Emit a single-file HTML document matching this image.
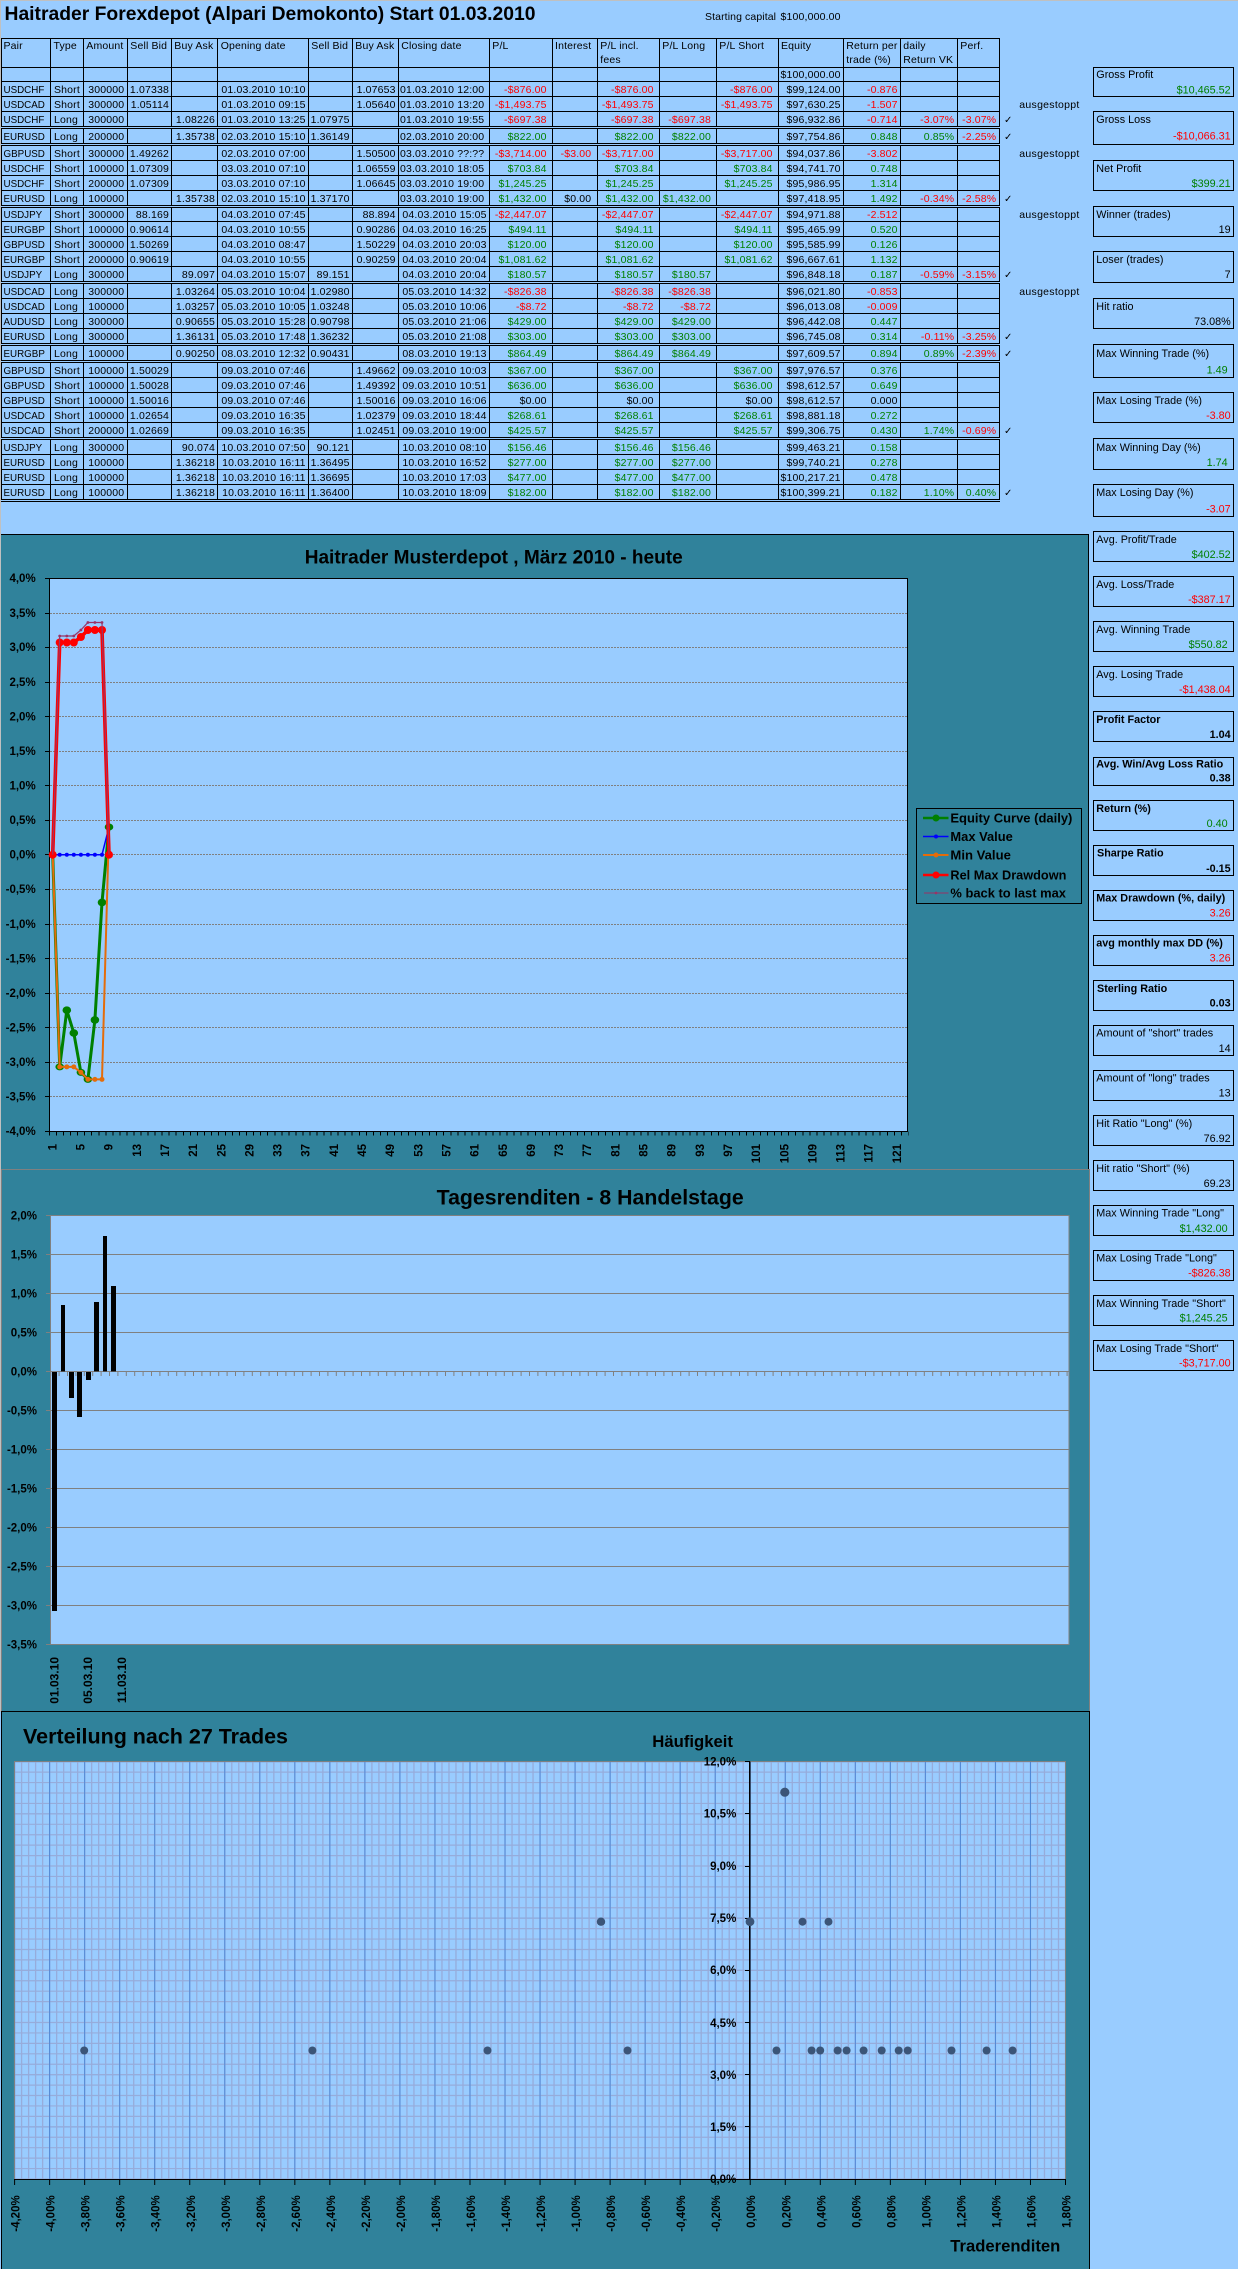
<!DOCTYPE html>
<html lang="de"><head><meta charset="utf-8"><title>Haitrader Forexdepot</title>
<style>
html,body{margin:0;padding:0;background:#99ccff}
svg{display:block}
text{font:10.5px "Liberation Sans",Arial,sans-serif;fill:#000}
.t text{letter-spacing:.16px}
.t .p{font-size:9.8px;letter-spacing:0}
.a,.ar,.ag{text-anchor:end}
.ar{fill:#f00}
.ag{fill:#008000}
.c{font:10px "DejaVu Sans",sans-serif;text-anchor:middle}
.st text{font-size:10.8px}
.st .bd{font-weight:bold}
.st rect{fill:none;stroke:#000}
.bl text,.bl{font-weight:bold;font-size:11.5px}
.e{text-anchor:end}
.x{shape-rendering:crispEdges;fill:none}
</style></head><body>
<svg xmlns="http://www.w3.org/2000/svg" width="1238" height="2269" viewBox="0 0 1238 2269">
<rect width="1238" height="2269" fill="#99ccff"/>
<rect width="1238" height="1" fill="#c0c0c0"/>
<rect width="1" height="1712" fill="#c0c0c0"/>

<text x="4.5" y="20" textLength="531" lengthAdjust="spacingAndGlyphs" style="font-size:19px;font-weight:bold">Haitrader Forexdepot (Alpari Demokonto) Start 01.03.2010</text>
<text x="705" y="20" textLength="71">Starting capital</text>
<text x="840.7" y="20" class="a" style="letter-spacing:.16px">$100,000.00</text>

<!-- table grid -->
<path class="x" stroke="#000" d="M1.5 38.5V501.5M50.5 38.5V501.5M83.5 38.5V501.5M127.5 38.5V501.5M171.5 38.5V501.5M217.5 38.5V501.5M308.5 38.5V501.5M352.5 38.5V501.5M398.5 38.5V501.5M489.5 38.5V501.5M552.5 38.5V501.5M597.5 38.5V501.5M659.5 38.5V501.5M716.5 38.5V501.5M778.5 38.5V501.5M843.5 38.5V501.5M900.5 38.5V501.5M957.5 38.5V501.5M999.5 38.5V501.5"/>
<path class="x" stroke="#99ccff" d="M1 127.5H1000M1 144.5H1000M1 206.5H1000M1 282.5H1000M1 344.5H1000M1 361.5H1000M1 438.5H1000M1 500.5H1000"/>
<path class="x" stroke="#000" d="M1 38.5H1000M1 67.5H1000M1 81.5H1000M1 96.5H1000M1 111.5H1000M1 126.5H1000M1 128.5H1000M1 143.5H1000M1 145.5H1000M1 160.5H1000M1 175.5H1000M1 190.5H1000M1 205.5H1000M1 207.5H1000M1 221.5H1000M1 236.5H1000M1 251.5H1000M1 266.5H1000M1 281.5H1000M1 283.5H1000M1 298.5H1000M1 313.5H1000M1 328.5H1000M1 343.5H1000M1 345.5H1000M1 360.5H1000M1 362.5H1000M1 377.5H1000M1 392.5H1000M1 407.5H1000M1 422.5H1000M1 437.5H1000M1 439.5H1000M1 454.5H1000M1 469.5H1000M1 484.5H1000M1 499.5H1000M1 501.5H1000"/>

<g class="t">
<g transform="translate(0,49)"><text x="3.5">Pair</text><text x="53.5">Type</text><text x="86.3">Amount</text><text x="130.3">Sell Bid</text><text x="174.3">Buy Ask</text><text x="220.7">Opening date</text><text x="311.3">Sell Bid</text><text x="355.3">Buy Ask</text><text x="401.3">Closing date</text><text x="492.3">P/L</text><text x="555">Interest</text><text x="600.3">P/L incl.</text><text x="662.3">P/L Long</text><text x="719.3">P/L Short</text><text x="781">Equity</text><text x="846.3">Return per</text><text x="903.3">daily</text><text x="960.3">Perf.</text></g>
<g transform="translate(0,63)"><text x="600.3">fees</text><text x="846.3">trade (%)</text><text x="903.3">Return VK</text></g>
<text x="840.7" y="78" class="a">$100,000.00</text>

<g transform="translate(0,93)"><text x="3.5" class="p">USDCHF</text><text x="54">Short</text><text x="124.3" class="a">300000</text><text x="169" class="a">1.07338</text><text x="305.7" class="a">01.03.2010 10:10</text><text x="395.7" class="a">1.07653</text><text x="484.3" class="a">01.03.2010 12:00</text><text x="546.7" class="ar">-$876.00</text><text x="653.7" class="ar">-$876.00</text><text x="772.7" class="ar">-$876.00</text><text x="840.7" class="a">$99,124.00</text><text x="897.7" class="ar">-0.876</text></g>
<g transform="translate(0,108)"><text x="3.5" class="p">USDCAD</text><text x="54">Short</text><text x="124.3" class="a">300000</text><text x="169" class="a">1.05114</text><text x="305.7" class="a">01.03.2010 09:15</text><text x="395.7" class="a">1.05640</text><text x="484.3" class="a">01.03.2010 13:20</text><text x="546.7" class="ar">-$1,493.75</text><text x="653.7" class="ar">-$1,493.75</text><text x="772.7" class="ar">-$1,493.75</text><text x="840.7" class="a">$97,630.25</text><text x="897.7" class="ar">-1.507</text></g>
<g transform="translate(0,123)"><text x="3.5" class="p">USDCHF</text><text x="54">Long</text><text x="124.3" class="a">300000</text><text x="215" class="a">1.08226</text><text x="305.7" class="a">01.03.2010 13:25</text><text x="349.7" class="a">1.07975</text><text x="484.3" class="a">01.03.2010 19:55</text><text x="546.7" class="ar">-$697.38</text><text x="653.7" class="ar">-$697.38</text><text x="711" class="ar">-$697.38</text><text x="840.7" class="a">$96,932.86</text><text x="897.7" class="ar">-0.714</text><text x="954.3" class="ar">-3.07%</text><text x="996.3" class="ar">-3.07%</text><text x="1008.3" class="c">✓</text></g>
<g transform="translate(0,140)"><text x="3.5" class="p">EURUSD</text><text x="54">Long</text><text x="124.3" class="a">200000</text><text x="215" class="a">1.35738</text><text x="305.7" class="a">02.03.2010 15:10</text><text x="349.7" class="a">1.36149</text><text x="484.3" class="a">02.03.2010 20:00</text><text x="546.7" class="ag">$822.00</text><text x="653.7" class="ag">$822.00</text><text x="711" class="ag">$822.00</text><text x="840.7" class="a">$97,754.86</text><text x="897.7" class="ag">0.848</text><text x="954.3" class="ag">0.85%</text><text x="996.3" class="ar">-2.25%</text><text x="1008.3" class="c">✓</text></g>
<g transform="translate(0,157)"><text x="3.5" class="p">GBPUSD</text><text x="54">Short</text><text x="124.3" class="a">300000</text><text x="169" class="a">1.49262</text><text x="305.7" class="a">02.03.2010 07:00</text><text x="395.7" class="a">1.50500</text><text x="484.3" class="a">03.03.2010 ??:??</text><text x="546.7" class="ar">-$3,714.00</text><text x="591.3" class="ar">-$3.00</text><text x="653.7" class="ar">-$3,717.00</text><text x="772.7" class="ar">-$3,717.00</text><text x="840.7" class="a">$94,037.86</text><text x="897.7" class="ar">-3.802</text></g>
<g transform="translate(0,172)"><text x="3.5" class="p">USDCHF</text><text x="54">Short</text><text x="124.3" class="a">100000</text><text x="169" class="a">1.07309</text><text x="305.7" class="a">03.03.2010 07:10</text><text x="395.7" class="a">1.06559</text><text x="484.3" class="a">03.03.2010 18:05</text><text x="546.7" class="ag">$703.84</text><text x="653.7" class="ag">$703.84</text><text x="772.7" class="ag">$703.84</text><text x="840.7" class="a">$94,741.70</text><text x="897.7" class="ag">0.748</text></g>
<g transform="translate(0,187)"><text x="3.5" class="p">USDCHF</text><text x="54">Short</text><text x="124.3" class="a">200000</text><text x="169" class="a">1.07309</text><text x="305.7" class="a">03.03.2010 07:10</text><text x="395.7" class="a">1.06645</text><text x="484.3" class="a">03.03.2010 19:00</text><text x="546.7" class="ag">$1,245.25</text><text x="653.7" class="ag">$1,245.25</text><text x="772.7" class="ag">$1,245.25</text><text x="840.7" class="a">$95,986.95</text><text x="897.7" class="ag">1.314</text></g>
<g transform="translate(0,202)"><text x="3.5" class="p">EURUSD</text><text x="54">Long</text><text x="124.3" class="a">100000</text><text x="215" class="a">1.35738</text><text x="305.7" class="a">02.03.2010 15:10</text><text x="349.7" class="a">1.37170</text><text x="484.3" class="a">03.03.2010 19:00</text><text x="546.7" class="ag">$1,432.00</text><text x="591.3" class="a">$0.00</text><text x="653.7" class="ag">$1,432.00</text><text x="711" class="ag">$1,432.00</text><text x="840.7" class="a">$97,418.95</text><text x="897.7" class="ag">1.492</text><text x="954.3" class="ar">-0.34%</text><text x="996.3" class="ar">-2.58%</text><text x="1008.3" class="c">✓</text></g>
<g transform="translate(0,218)"><text x="3.5" class="p">USDJPY</text><text x="54">Short</text><text x="124.3" class="a">300000</text><text x="169" class="a">88.169</text><text x="305.7" class="a">04.03.2010 07:45</text><text x="395.7" class="a">88.894</text><text x="486.7" class="a">04.03.2010 15:05</text><text x="546.7" class="ar">-$2,447.07</text><text x="653.7" class="ar">-$2,447.07</text><text x="772.7" class="ar">-$2,447.07</text><text x="840.7" class="a">$94,971.88</text><text x="897.7" class="ar">-2.512</text></g>
<g transform="translate(0,233)"><text x="3.5" class="p">EURGBP</text><text x="54">Short</text><text x="124.3" class="a">100000</text><text x="169" class="a">0.90614</text><text x="305.7" class="a">04.03.2010 10:55</text><text x="395.7" class="a">0.90286</text><text x="486.7" class="a">04.03.2010 16:25</text><text x="546.7" class="ag">$494.11</text><text x="653.7" class="ag">$494.11</text><text x="772.7" class="ag">$494.11</text><text x="840.7" class="a">$95,465.99</text><text x="897.7" class="ag">0.520</text></g>
<g transform="translate(0,248)"><text x="3.5" class="p">GBPUSD</text><text x="54">Short</text><text x="124.3" class="a">300000</text><text x="169" class="a">1.50269</text><text x="305.7" class="a">04.03.2010 08:47</text><text x="395.7" class="a">1.50229</text><text x="486.7" class="a">04.03.2010 20:03</text><text x="546.7" class="ag">$120.00</text><text x="653.7" class="ag">$120.00</text><text x="772.7" class="ag">$120.00</text><text x="840.7" class="a">$95,585.99</text><text x="897.7" class="ag">0.126</text></g>
<g transform="translate(0,263)"><text x="3.5" class="p">EURGBP</text><text x="54">Short</text><text x="124.3" class="a">200000</text><text x="169" class="a">0.90619</text><text x="305.7" class="a">04.03.2010 10:55</text><text x="395.7" class="a">0.90259</text><text x="486.7" class="a">04.03.2010 20:04</text><text x="546.7" class="ag">$1,081.62</text><text x="653.7" class="ag">$1,081.62</text><text x="772.7" class="ag">$1,081.62</text><text x="840.7" class="a">$96,667.61</text><text x="897.7" class="ag">1.132</text></g>
<g transform="translate(0,278)"><text x="3.5" class="p">USDJPY</text><text x="54">Long</text><text x="124.3" class="a">300000</text><text x="215" class="a">89.097</text><text x="305.7" class="a">04.03.2010 15:07</text><text x="349.7" class="a">89.151</text><text x="486.7" class="a">04.03.2010 20:04</text><text x="546.7" class="ag">$180.57</text><text x="653.7" class="ag">$180.57</text><text x="711" class="ag">$180.57</text><text x="840.7" class="a">$96,848.18</text><text x="897.7" class="ag">0.187</text><text x="954.3" class="ar">-0.59%</text><text x="996.3" class="ar">-3.15%</text><text x="1008.3" class="c">✓</text></g>
<g transform="translate(0,295)"><text x="3.5" class="p">USDCAD</text><text x="54">Long</text><text x="124.3" class="a">300000</text><text x="215" class="a">1.03264</text><text x="305.7" class="a">05.03.2010 10:04</text><text x="349.7" class="a">1.02980</text><text x="486.7" class="a">05.03.2010 14:32</text><text x="546.7" class="ar">-$826.38</text><text x="653.7" class="ar">-$826.38</text><text x="711" class="ar">-$826.38</text><text x="840.7" class="a">$96,021.80</text><text x="897.7" class="ar">-0.853</text></g>
<g transform="translate(0,310)"><text x="3.5" class="p">USDCAD</text><text x="54">Long</text><text x="124.3" class="a">100000</text><text x="215" class="a">1.03257</text><text x="305.7" class="a">05.03.2010 10:05</text><text x="349.7" class="a">1.03248</text><text x="486.7" class="a">05.03.2010 10:06</text><text x="546.7" class="ar">-$8.72</text><text x="653.7" class="ar">-$8.72</text><text x="711" class="ar">-$8.72</text><text x="840.7" class="a">$96,013.08</text><text x="897.7" class="ar">-0.009</text></g>
<g transform="translate(0,325)"><text x="3.5" class="p">AUDUSD</text><text x="54">Long</text><text x="124.3" class="a">300000</text><text x="215" class="a">0.90655</text><text x="305.7" class="a">05.03.2010 15:28</text><text x="349.7" class="a">0.90798</text><text x="486.7" class="a">05.03.2010 21:06</text><text x="546.7" class="ag">$429.00</text><text x="653.7" class="ag">$429.00</text><text x="711" class="ag">$429.00</text><text x="840.7" class="a">$96,442.08</text><text x="897.7" class="ag">0.447</text></g>
<g transform="translate(0,340)"><text x="3.5" class="p">EURUSD</text><text x="54">Long</text><text x="124.3" class="a">300000</text><text x="215" class="a">1.36131</text><text x="305.7" class="a">05.03.2010 17:48</text><text x="349.7" class="a">1.36232</text><text x="486.7" class="a">05.03.2010 21:08</text><text x="546.7" class="ag">$303.00</text><text x="653.7" class="ag">$303.00</text><text x="711" class="ag">$303.00</text><text x="840.7" class="a">$96,745.08</text><text x="897.7" class="ag">0.314</text><text x="954.3" class="ar">-0.11%</text><text x="996.3" class="ar">-3.25%</text><text x="1008.3" class="c">✓</text></g>
<g transform="translate(0,357)"><text x="3.5" class="p">EURGBP</text><text x="54">Long</text><text x="124.3" class="a">100000</text><text x="215" class="a">0.90250</text><text x="305.7" class="a">08.03.2010 12:32</text><text x="349.7" class="a">0.90431</text><text x="486.7" class="a">08.03.2010 19:13</text><text x="546.7" class="ag">$864.49</text><text x="653.7" class="ag">$864.49</text><text x="711" class="ag">$864.49</text><text x="840.7" class="a">$97,609.57</text><text x="897.7" class="ag">0.894</text><text x="954.3" class="ag">0.89%</text><text x="996.3" class="ar">-2.39%</text><text x="1008.3" class="c">✓</text></g>
<g transform="translate(0,374)"><text x="3.5" class="p">GBPUSD</text><text x="54">Short</text><text x="124.3" class="a">100000</text><text x="169" class="a">1.50029</text><text x="305.7" class="a">09.03.2010 07:46</text><text x="395.7" class="a">1.49662</text><text x="486.7" class="a">09.03.2010 10:03</text><text x="546.7" class="ag">$367.00</text><text x="653.7" class="ag">$367.00</text><text x="772.7" class="ag">$367.00</text><text x="840.7" class="a">$97,976.57</text><text x="897.7" class="ag">0.376</text></g>
<g transform="translate(0,389)"><text x="3.5" class="p">GBPUSD</text><text x="54">Short</text><text x="124.3" class="a">100000</text><text x="169" class="a">1.50028</text><text x="305.7" class="a">09.03.2010 07:46</text><text x="395.7" class="a">1.49392</text><text x="486.7" class="a">09.03.2010 10:51</text><text x="546.7" class="ag">$636.00</text><text x="653.7" class="ag">$636.00</text><text x="772.7" class="ag">$636.00</text><text x="840.7" class="a">$98,612.57</text><text x="897.7" class="ag">0.649</text></g>
<g transform="translate(0,404)"><text x="3.5" class="p">GBPUSD</text><text x="54">Short</text><text x="124.3" class="a">100000</text><text x="169" class="a">1.50016</text><text x="305.7" class="a">09.03.2010 07:46</text><text x="395.7" class="a">1.50016</text><text x="486.7" class="a">09.03.2010 16:06</text><text x="546.7" class="a">$0.00</text><text x="653.7" class="a">$0.00</text><text x="772.7" class="a">$0.00</text><text x="840.7" class="a">$98,612.57</text><text x="897.7" class="a">0.000</text></g>
<g transform="translate(0,419)"><text x="3.5" class="p">USDCAD</text><text x="54">Short</text><text x="124.3" class="a">100000</text><text x="169" class="a">1.02654</text><text x="305.7" class="a">09.03.2010 16:35</text><text x="395.7" class="a">1.02379</text><text x="486.7" class="a">09.03.2010 18:44</text><text x="546.7" class="ag">$268.61</text><text x="653.7" class="ag">$268.61</text><text x="772.7" class="ag">$268.61</text><text x="840.7" class="a">$98,881.18</text><text x="897.7" class="ag">0.272</text></g>
<g transform="translate(0,434)"><text x="3.5" class="p">USDCAD</text><text x="54">Short</text><text x="124.3" class="a">200000</text><text x="169" class="a">1.02669</text><text x="305.7" class="a">09.03.2010 16:35</text><text x="395.7" class="a">1.02451</text><text x="486.7" class="a">09.03.2010 19:00</text><text x="546.7" class="ag">$425.57</text><text x="653.7" class="ag">$425.57</text><text x="772.7" class="ag">$425.57</text><text x="840.7" class="a">$99,306.75</text><text x="897.7" class="ag">0.430</text><text x="954.3" class="ag">1.74%</text><text x="996.3" class="ar">-0.69%</text><text x="1008.3" class="c">✓</text></g>
<g transform="translate(0,451)"><text x="3.5" class="p">USDJPY</text><text x="54">Long</text><text x="124.3" class="a">300000</text><text x="215" class="a">90.074</text><text x="305.7" class="a">10.03.2010 07:50</text><text x="349.7" class="a">90.121</text><text x="486.7" class="a">10.03.2010 08:10</text><text x="546.7" class="ag">$156.46</text><text x="653.7" class="ag">$156.46</text><text x="711" class="ag">$156.46</text><text x="840.7" class="a">$99,463.21</text><text x="897.7" class="ag">0.158</text></g>
<g transform="translate(0,466)"><text x="3.5" class="p">EURUSD</text><text x="54">Long</text><text x="124.3" class="a">100000</text><text x="215" class="a">1.36218</text><text x="305.7" class="a">10.03.2010 16:11</text><text x="349.7" class="a">1.36495</text><text x="486.7" class="a">10.03.2010 16:52</text><text x="546.7" class="ag">$277.00</text><text x="653.7" class="ag">$277.00</text><text x="711" class="ag">$277.00</text><text x="840.7" class="a">$99,740.21</text><text x="897.7" class="ag">0.278</text></g>
<g transform="translate(0,481)"><text x="3.5" class="p">EURUSD</text><text x="54">Long</text><text x="124.3" class="a">100000</text><text x="215" class="a">1.36218</text><text x="305.7" class="a">10.03.2010 16:11</text><text x="349.7" class="a">1.36695</text><text x="486.7" class="a">10.03.2010 17:03</text><text x="546.7" class="ag">$477.00</text><text x="653.7" class="ag">$477.00</text><text x="711" class="ag">$477.00</text><text x="840.7" class="a">$100,217.21</text><text x="897.7" class="ag">0.478</text></g>
<g transform="translate(0,496)"><text x="3.5" class="p">EURUSD</text><text x="54">Long</text><text x="124.3" class="a">100000</text><text x="215" class="a">1.36218</text><text x="305.7" class="a">10.03.2010 16:11</text><text x="349.7" class="a">1.36400</text><text x="486.7" class="a">10.03.2010 18:09</text><text x="546.7" class="ag">$182.00</text><text x="653.7" class="ag">$182.00</text><text x="711" class="ag">$182.00</text><text x="840.7" class="a">$100,399.21</text><text x="897.7" class="ag">0.182</text><text x="954.3" class="ag">1.10%</text><text x="996.3" class="ag">0.40%</text><text x="1008.3" class="c">✓</text></g>
</g>

<text x="1019.3" y="108" textLength="60">ausgestoppt</text>
<text x="1019.3" y="157" textLength="60">ausgestoppt</text>
<text x="1019.3" y="218" textLength="60">ausgestoppt</text>
<text x="1019.3" y="295" textLength="60">ausgestoppt</text>

<!-- stats -->
<g class="st">
<g class="x" stroke="#000"><rect x="1093.5" y="67.5" width="140" height="29"/><rect x="1093.5" y="111.5" width="140" height="33"/><rect x="1093.5" y="160.5" width="140" height="30"/><rect x="1093.5" y="206.5" width="140" height="30"/><rect x="1093.5" y="251.5" width="140" height="31"/><rect x="1093.5" y="298.5" width="140" height="30"/><rect x="1093.5" y="344.5" width="140" height="33"/><rect x="1093.5" y="392.5" width="140" height="30"/><rect x="1093.5" y="438.5" width="140" height="31"/><rect x="1093.5" y="484.5" width="140" height="32"/><rect x="1093.5" y="531.5" width="140" height="30"/><rect x="1093.5" y="576.5" width="140" height="30"/><rect x="1093.5" y="621.5" width="140" height="30"/><rect x="1093.5" y="666.5" width="140" height="30"/><rect x="1093.5" y="711.5" width="140" height="30"/><rect x="1093.5" y="757.5" width="140" height="28"/><rect x="1093.5" y="800.5" width="140" height="30"/><rect x="1093.5" y="845.5" width="140" height="30"/><rect x="1093.5" y="890.5" width="140" height="30"/><rect x="1093.5" y="935.5" width="140" height="30"/><rect x="1093.5" y="980.5" width="140" height="30"/><rect x="1093.5" y="1025.5" width="140" height="30"/><rect x="1093.5" y="1070.5" width="140" height="30"/><rect x="1093.5" y="1115.5" width="140" height="30"/><rect x="1093.5" y="1160.5" width="140" height="30"/><rect x="1093.5" y="1205.5" width="140" height="30"/><rect x="1093.5" y="1250.5" width="140" height="30"/><rect x="1093.5" y="1295.5" width="140" height="30"/><rect x="1093.5" y="1340.5" width="140" height="30"/></g>
<text x="1096.3" y="78">Gross Profit</text><text x="1230.7" y="93.3" class="ag">$10,465.52</text>
<text x="1096.3" y="123">Gross Loss</text><text x="1230.7" y="139.7" class="ar">-$10,066.31</text>
<text x="1096.3" y="172">Net Profit</text><text x="1230.7" y="187" class="ag">$399.21</text>
<text x="1096.3" y="218">Winner (trades)</text><text x="1230.7" y="233" class="a">19</text>
<text x="1096.3" y="263">Loser (trades)</text><text x="1230.7" y="278" class="a">7</text>
<text x="1096.3" y="310">Hit ratio</text><text x="1230.7" y="325" class="a">73.08%</text>
<text x="1096.3" y="357">Max Winning Trade (%)</text><text x="1227.7" y="373.7" class="ag">1.49</text>
<text x="1096.3" y="404">Max Losing Trade (%)</text><text x="1230.7" y="418.8" class="ar">-3.80</text>
<text x="1096.3" y="451">Max Winning Day (%)</text><text x="1227.7" y="466" class="ag">1.74</text>
<text x="1096.3" y="496">Max Losing Day (%)</text><text x="1230.7" y="512.5" class="ar">-3.07</text>
<text x="1096.3" y="543">Avg. Profit/Trade</text><text x="1230.7" y="558" class="ag">$402.52</text>
<text x="1096.3" y="588">Avg. Loss/Trade</text><text x="1230.7" y="603" class="ar">-$387.17</text>
<text x="1096.3" y="633">Avg. Winning Trade</text><text x="1227.7" y="648" class="ag">$550.82</text>
<text x="1096.3" y="678">Avg. Losing Trade</text><text x="1230.7" y="693" class="ar">-$1,438.04</text>
<text x="1096.3" y="723" class="bd">Profit Factor</text><text x="1230.7" y="738" class="a bd">1.04</text>
<text x="1096.3" y="767.3" class="bd">Avg. Win/Avg Loss Ratio</text><text x="1230.7" y="781.6" class="a bd">0.38</text>
<text x="1096.3" y="811.8" class="bd">Return (%)</text><text x="1227.7" y="827" class="ag">0.40</text>
<text x="1097" y="856.7" class="bd">Sharpe Ratio</text><text x="1230.7" y="871.8" class="a bd">-0.15</text>
<text x="1096.3" y="901.6" class="bd">Max Drawdown (%, daily)</text><text x="1230.7" y="916.7" class="ar">3.26</text>
<text x="1096.3" y="946.5" class="bd">avg monthly max DD (%)</text><text x="1230.7" y="961.6" class="ar">3.26</text>
<text x="1097" y="991.8" class="bd">Sterling Ratio</text><text x="1230.7" y="1006.5" class="a bd">0.03</text>
<text x="1096.3" y="1036.7">Amount of "short" trades</text><text x="1230.7" y="1051.8" class="a">14</text>
<text x="1096.3" y="1081.6">Amount of "long" trades</text><text x="1230.7" y="1096.7" class="a">13</text>
<text x="1096.3" y="1127">Hit Ratio "Long" (%)</text><text x="1230.7" y="1142" class="a">76.92</text>
<text x="1096.3" y="1171.8">Hit ratio "Short" (%)</text><text x="1230.7" y="1187" class="a">69.23</text>
<text x="1096.3" y="1216.7">Max Winning Trade "Long"</text><text x="1227.7" y="1231.8" class="ag">$1,432.00</text>
<text x="1096.3" y="1261.6">Max Losing Trade "Long"</text><text x="1230.7" y="1276.7" class="ar">-$826.38</text>
<text x="1096.3" y="1307">Max Winning Trade "Short"</text><text x="1227.7" y="1321.6" class="ag">$1,245.25</text>
<text x="1096.3" y="1352">Max Losing Trade "Short"</text><text x="1230.7" y="1366.5" class="ar">-$3,717.00</text>
</g>

<!-- CHART 1 -->
<rect x="1" y="534" width="1087.5" height="636" fill="#30829b"/>
<path class="x" stroke="#000" d="M1 534.5H1088.5V1169"/>
<text x="304.7" y="563.5" textLength="378" lengthAdjust="spacingAndGlyphs" style="font-size:19.4px;font-weight:bold">Haitrader Musterdepot , März 2010 - heute</text>
<rect x="49.5" y="578.5" width="858" height="553" fill="#99ccff" stroke="#000" class="x" style="fill:#99ccff"/>
<path class="x" stroke="#808080" stroke-dasharray="2 1" d="M50 613.5H907M50 647.5H907M50 682.5H907M50 716.5H907M50 751.5H907M50 785.5H907M50 820.5H907M50 854.5H907M50 889.5H907M50 924.5H907M50 958.5H907M50 993.5H907M50 1027.5H907M50 1062.5H907M50 1096.5H907"/>
<path class="x" stroke="#000" stroke-width="4" stroke-dasharray="1 6.04" d="M49 1133.5H908.5"/>
<path class="x" stroke="#000" d="M45 578.5H49M45 613.5H49M45 647.5H49M45 682.5H49M45 716.5H49M45 751.5H49M45 785.5H49M45 820.5H49M45 854.5H49M45 889.5H49M45 924.5H49M45 958.5H49M45 993.5H49M45 1027.5H49M45 1062.5H49M45 1096.5H49M45 1131.5H49"/>
<g class="bl">
<text x="35.7" y="582.2" class="e">4,0%</text><text x="35.7" y="617" class="e">3,5%</text><text x="35.7" y="651" class="e">3,0%</text><text x="35.7" y="686" class="e">2,5%</text><text x="35.7" y="720.5" class="e">2,0%</text><text x="35.7" y="755" class="e">1,5%</text><text x="35.7" y="789.5" class="e">1,0%</text><text x="35.7" y="824" class="e">0,5%</text><text x="35.7" y="858.7" class="e">0,0%</text><text x="35.7" y="893" class="e">-0,5%</text><text x="35.7" y="928" class="e">-1,0%</text><text x="35.7" y="962.5" class="e">-1,5%</text><text x="35.7" y="997" class="e">-2,0%</text><text x="35.7" y="1031.5" class="e">-2,5%</text><text x="35.7" y="1066" class="e">-3,0%</text><text x="35.7" y="1100.5" class="e">-3,5%</text><text x="35.7" y="1135" class="e">-4,0%</text>
</g>
<g class="bl" style="font-size:11px">
<text transform="translate(56.3,1144) rotate(-90)" class="e">1</text><text transform="translate(84.5,1144) rotate(-90)" class="e">5</text><text transform="translate(112.7,1144) rotate(-90)" class="e">9</text><text transform="translate(140.8,1144) rotate(-90)" class="e">13</text><text transform="translate(169,1144) rotate(-90)" class="e">17</text><text transform="translate(197.1,1144) rotate(-90)" class="e">21</text><text transform="translate(225.3,1144) rotate(-90)" class="e">25</text><text transform="translate(253.4,1144) rotate(-90)" class="e">29</text><text transform="translate(281.6,1144) rotate(-90)" class="e">33</text><text transform="translate(309.7,1144) rotate(-90)" class="e">37</text><text transform="translate(337.9,1144) rotate(-90)" class="e">41</text><text transform="translate(366,1144) rotate(-90)" class="e">45</text><text transform="translate(394.2,1144) rotate(-90)" class="e">49</text><text transform="translate(422.3,1144) rotate(-90)" class="e">53</text><text transform="translate(450.5,1144) rotate(-90)" class="e">57</text><text transform="translate(478.6,1144) rotate(-90)" class="e">61</text><text transform="translate(506.8,1144) rotate(-90)" class="e">65</text><text transform="translate(534.9,1144) rotate(-90)" class="e">69</text><text transform="translate(563.1,1144) rotate(-90)" class="e">73</text><text transform="translate(591.2,1144) rotate(-90)" class="e">77</text><text transform="translate(619.4,1144) rotate(-90)" class="e">81</text><text transform="translate(647.5,1144) rotate(-90)" class="e">85</text><text transform="translate(675.7,1144) rotate(-90)" class="e">89</text><text transform="translate(703.8,1144) rotate(-90)" class="e">93</text><text transform="translate(732,1144) rotate(-90)" class="e">97</text><text transform="translate(760.1,1144) rotate(-90)" class="e">101</text><text transform="translate(788.3,1144) rotate(-90)" class="e">105</text><text transform="translate(816.4,1144) rotate(-90)" class="e">109</text><text transform="translate(844.6,1144) rotate(-90)" class="e">113</text><text transform="translate(872.7,1144) rotate(-90)" class="e">117</text><text transform="translate(900.9,1144) rotate(-90)" class="e">121</text>
</g>
<!-- series -->
<polyline fill="none" stroke="#008000" stroke-width="3" points="52.7,854.7 59.7,1066.9 66.8,1010.2 73.8,1033 80.9,1072.4 87.9,1079.4 94.9,1019.9 102,902.4 109,827"/>
<g fill="#008000"><ellipse cx="59.7" cy="1066.9" rx="4.3" ry="3.5"/><ellipse cx="66.8" cy="1010.2" rx="4.3" ry="3.8"/><ellipse cx="73.8" cy="1033" rx="4.3" ry="3.8"/><ellipse cx="80.9" cy="1072.4" rx="4.3" ry="3.5"/><ellipse cx="87.9" cy="1079.4" rx="4.3" ry="3.5"/><ellipse cx="94.9" cy="1019.9" rx="4.3" ry="3.8"/><ellipse cx="102" cy="902.4" rx="4.3" ry="3.8"/><ellipse cx="109" cy="827" rx="4.3" ry="3.5"/></g>
<polyline fill="none" stroke="#0000ff" stroke-width="1.5" points="52.7,854.7 59.7,854.7 66.8,854.7 73.8,854.7 80.9,854.7 87.9,854.7 94.9,854.7 102,854.7 109,827"/>
<g fill="#0000ff"><circle cx="59.7" cy="854.7" r="2"/><circle cx="66.8" cy="854.7" r="2"/><circle cx="73.8" cy="854.7" r="2"/><circle cx="80.9" cy="854.7" r="2"/><circle cx="87.9" cy="854.7" r="2"/><circle cx="94.9" cy="854.7" r="2"/><circle cx="102" cy="854.7" r="2"/></g>
<polyline fill="none" stroke="#e46c0a" stroke-width="2" points="52.7,854.7 59.7,1066.9 66.8,1066.9 73.8,1066.9 80.9,1072.4 87.9,1079.4 94.9,1079.4 102,1079.4 109,827"/>
<g fill="#e46c0a"><circle cx="59.7" cy="1066.9" r="2.5"/><circle cx="66.8" cy="1066.9" r="2.5"/><circle cx="73.8" cy="1066.9" r="2.5"/><circle cx="80.9" cy="1072.4" r="2.5"/><circle cx="87.9" cy="1079.4" r="2.5"/><circle cx="94.9" cy="1079.4" r="2.5"/><circle cx="102" cy="1079.4" r="2.5"/></g>
<polyline fill="none" stroke="#ff0000" stroke-width="3.6" points="52.7,854.7 59.7,642.5 66.8,642.5 73.8,642.5 80.9,637 87.9,630 94.9,630 102,630 109,854.7"/>
<g fill="#ff0000"><circle cx="52.7" cy="854.7" r="4"/><circle cx="59.7" cy="642.5" r="4"/><circle cx="66.8" cy="642.5" r="4"/><circle cx="73.8" cy="642.5" r="4"/><circle cx="80.9" cy="637" r="4"/><circle cx="87.9" cy="630" r="4"/><circle cx="94.9" cy="630" r="4"/><circle cx="102" cy="630" r="4"/><circle cx="109" cy="854.7" r="4"/></g>
<polyline fill="none" stroke="#993366" stroke-width="1.2" points="52.7,854.7 59.7,636 66.8,636 73.8,636 80.9,630 87.9,622.5 94.9,622.5 102,622.5 109,854.7"/>
<g fill="#993366"><circle cx="59.7" cy="636" r="1.4"/><circle cx="66.8" cy="636" r="1.4"/><circle cx="73.8" cy="636" r="1.4"/><circle cx="80.9" cy="630" r="1.4"/><circle cx="87.9" cy="622.5" r="1.4"/><circle cx="94.9" cy="622.5" r="1.4"/><circle cx="102" cy="622.5" r="1.4"/></g>
<!-- legend -->
<rect class="x" x="916.5" y="808.5" width="165" height="95" stroke="#000"/>
<path stroke="#008000" stroke-width="2.5" d="M923 818H948.5"/><circle cx="936" cy="818" r="3.5" fill="#008000"/>
<path stroke="#0000ff" stroke-width="1.5" d="M923 836.5H948.5"/><circle cx="936" cy="836.5" r="2" fill="#0000ff"/>
<path stroke="#e46c0a" stroke-width="2" d="M923 855H948.5"/><circle cx="936" cy="855" r="2.5" fill="#e46c0a"/>
<path stroke="#ff0000" stroke-width="2.5" d="M923 875H948.5"/><circle cx="936" cy="875" r="3.5" fill="#f00"/>
<path stroke="#993366" d="M924 893H948.5"/><circle cx="936" cy="893" r="1.4" fill="#993366"/>
<g style="font-weight:bold">
<text x="950.4" y="822.5" textLength="122" lengthAdjust="spacingAndGlyphs" style="font-size:12.5px;font-weight:bold">Equity Curve (daily)</text>
<text x="950.4" y="841" textLength="62.4" lengthAdjust="spacingAndGlyphs" style="font-size:12.5px;font-weight:bold">Max Value</text>
<text x="950.4" y="859.5" textLength="60.5" lengthAdjust="spacingAndGlyphs" style="font-size:12.5px;font-weight:bold">Min Value</text>
<text x="950.4" y="879.5" textLength="116" lengthAdjust="spacingAndGlyphs" style="font-size:12.5px;font-weight:bold">Rel Max Drawdown</text>
<text x="950.4" y="897.5" textLength="115.6" lengthAdjust="spacingAndGlyphs" style="font-size:12.5px;font-weight:bold">% back to last max</text>
</g>

<!-- CHART 2 -->
<rect x="1" y="1169" width="1089" height="543" fill="#30829b"/>
<path class="x" stroke="#808080" d="M1.5 1712V1169.5H1089.5V1712"/>
<text x="436.7" y="1204.6" textLength="307" lengthAdjust="spacingAndGlyphs" style="font-size:21px;font-weight:bold">Tagesrenditen - 8 Handelstage</text>
<rect class="x" x="50.5" y="1215.5" width="1018.5" height="429" style="fill:#99ccff" stroke="#808080"/>
<path class="x" stroke="#808080" d="M46 1215.5H1069M46 1254.5H1069M46 1293.5H1069M46 1332.5H1069M46 1371.5H1069M46 1410.5H1069M46 1449.5H1069M46 1488.5H1069M46 1527.5H1069M46 1566.5H1069M46 1605.5H1069M46 1644.5H1069"/>
<path stroke="#808080" stroke-width="4" stroke-dasharray="1 7.4" d="M50.2 1374H1069"/>
<path fill="#000" d="M52 1372h5v239h-5zM61 1305h4v66.4h-4zM69 1372h5v26h-5zM77 1372h5v45h-5zM86 1372h5v8h-5zM94 1302h5v69.4h-5zM103 1236h4v135.4h-4zM111 1286h5v85.4h-5z"/>
<g class="bl" style="font-size:11.7px">
<text x="37" y="1219.5" class="e">2,0%</text><text x="37" y="1258.5" class="e">1,5%</text><text x="37" y="1297.5" class="e">1,0%</text><text x="37" y="1336.5" class="e">0,5%</text><text x="37" y="1375.5" class="e">0,0%</text><text x="37" y="1414.5" class="e">-0,5%</text><text x="37" y="1453.5" class="e">-1,0%</text><text x="37" y="1492.5" class="e">-1,5%</text><text x="37" y="1531.5" class="e">-2,0%</text><text x="37" y="1570.5" class="e">-2,5%</text><text x="37" y="1609.5" class="e">-3,0%</text><text x="37" y="1648.5" class="e">-3,5%</text>
<text transform="translate(58.7,1657) rotate(-90)" class="e" style="font-size:12px">01.03.10</text><text transform="translate(92,1657) rotate(-90)" class="e" style="font-size:12px">05.03.10</text><text transform="translate(126,1657) rotate(-90)" class="e" style="font-size:12px">11.03.10</text>
</g>

<!-- CHART 3 -->
<rect x="1" y="1711" width="1089" height="558" fill="#30829b"/>
<path class="x" stroke="#000" d="M1.5 2269V1711.5H1089.5V2269"/>
<text x="23" y="1743.5" textLength="265" lengthAdjust="spacingAndGlyphs" style="font-size:21.5px;font-weight:bold">Verteilung nach 27 Trades</text>
<text x="652.3" y="1747" textLength="80.7" lengthAdjust="spacingAndGlyphs" style="font-size:16.5px;font-weight:bold">Häufigkeit</text>
<text x="950.3" y="2251.5" textLength="110" lengthAdjust="spacingAndGlyphs" style="font-size:17px;font-weight:bold">Traderenditen</text>
<rect x="14.6" y="1761.7" width="1050.8" height="417.3" fill="#99ccff"/>
<path fill="none" stroke="#4f88d6" stroke-width="1050.8" stroke-dasharray="1 51.16" d="M540 1761.2V2179.4"/>
<path fill="none" stroke="#96acdb" stroke-width="417.3" stroke-dasharray="1.3 5.706" d="M13.95 1970.3H1065.9"/>
<path fill="none" stroke="#96acdb" stroke-width="1050.8" stroke-dasharray="1.2 9.232" d="M540 1761.1V2179.4"/>
<path fill="none" stroke="#4f88d6" stroke-width="417.3" stroke-dasharray="1 34.03" d="M14.1 1970.3H1065.9"/>
<path class="x" stroke="#808080" d="M14.5 2179V1761.5H1065.5V2179"/>
<path class="x" stroke="#000" d="M14 2179.5H1066"/>
<path class="x" stroke="#000" stroke-width="1.5" d="M749.8 1761.5V2179.5"/>
<path stroke="#000" stroke-width="5" stroke-dasharray="1 34.03" fill="none" d="M14.1 2182.5H1066"/>
<path class="x" stroke="#000" d="M745 1761.5H750M745 1813.5H750M745 1866.5H750M745 1918.5H750M745 1970.5H750M745 2022.5H750M745 2074.5H750M745 2126.5H750"/>
<g fill="#3b5578">
<circle cx="84.2" cy="2050.5" r="4"/><circle cx="312.4" cy="2050.5" r="4"/><circle cx="487.5" cy="2050.5" r="4"/><circle cx="627.5" cy="2050.5" r="4"/><circle cx="601" cy="1921.7" r="4.2"/><circle cx="750" cy="1921.7" r="4.4"/><circle cx="784.8" cy="1792.2" r="4.6"/><circle cx="776.5" cy="2050.5" r="4"/><circle cx="811.6" cy="2050.5" r="4"/><circle cx="820.2" cy="2050.5" r="4"/><circle cx="837.6" cy="2050.5" r="4"/><circle cx="846.6" cy="2050.5" r="4"/><circle cx="863.6" cy="2050.5" r="4"/><circle cx="881.7" cy="2050.5" r="4"/><circle cx="898.7" cy="2050.5" r="4"/><circle cx="907.7" cy="2050.5" r="4"/><circle cx="951.5" cy="2050.5" r="4"/><circle cx="986.6" cy="2050.5" r="4"/><circle cx="1012.6" cy="2050.5" r="4"/><circle cx="802.5" cy="1921.7" r="4"/><circle cx="828.5" cy="1921.7" r="4"/>
</g>
<g class="bl" style="font-size:11.7px">
<text x="736.3" y="1765.5" class="e">12,0%</text><text x="736.3" y="1817.5" class="e">10,5%</text><text x="736.3" y="1870" class="e">9,0%</text><text x="736.3" y="1922" class="e">7,5%</text><text x="736.3" y="1974" class="e">6,0%</text><text x="736.3" y="2027" class="e">4,5%</text><text x="736.3" y="2079" class="e">3,0%</text><text x="736.3" y="2131" class="e">1,5%</text><text x="736.3" y="2183" class="e">0,0%</text>
<text transform="translate(19.6,2195.3) rotate(-90)" class="e">-4,20%</text><text transform="translate(54.6,2195.3) rotate(-90)" class="e">-4,00%</text><text transform="translate(89.7,2195.3) rotate(-90)" class="e">-3,80%</text><text transform="translate(124.7,2195.3) rotate(-90)" class="e">-3,60%</text><text transform="translate(159.7,2195.3) rotate(-90)" class="e">-3,40%</text><text transform="translate(194.8,2195.3) rotate(-90)" class="e">-3,20%</text><text transform="translate(229.8,2195.3) rotate(-90)" class="e">-3,00%</text><text transform="translate(264.8,2195.3) rotate(-90)" class="e">-2,80%</text><text transform="translate(299.8,2195.3) rotate(-90)" class="e">-2,60%</text><text transform="translate(334.9,2195.3) rotate(-90)" class="e">-2,40%</text><text transform="translate(369.9,2195.3) rotate(-90)" class="e">-2,20%</text><text transform="translate(404.9,2195.3) rotate(-90)" class="e">-2,00%</text><text transform="translate(440,2195.3) rotate(-90)" class="e">-1,80%</text><text transform="translate(475,2195.3) rotate(-90)" class="e">-1,60%</text><text transform="translate(510,2195.3) rotate(-90)" class="e">-1,40%</text><text transform="translate(545,2195.3) rotate(-90)" class="e">-1,20%</text><text transform="translate(580.1,2195.3) rotate(-90)" class="e">-1,00%</text><text transform="translate(615.1,2195.3) rotate(-90)" class="e">-0,80%</text><text transform="translate(650.1,2195.3) rotate(-90)" class="e">-0,60%</text><text transform="translate(685.2,2195.3) rotate(-90)" class="e">-0,40%</text><text transform="translate(720.2,2195.3) rotate(-90)" class="e">-0,20%</text><text transform="translate(755.2,2195.3) rotate(-90)" class="e">0,00%</text><text transform="translate(790.3,2195.3) rotate(-90)" class="e">0,20%</text><text transform="translate(825.3,2195.3) rotate(-90)" class="e">0,40%</text><text transform="translate(860.3,2195.3) rotate(-90)" class="e">0,60%</text><text transform="translate(895.4,2195.3) rotate(-90)" class="e">0,80%</text><text transform="translate(930.4,2195.3) rotate(-90)" class="e">1,00%</text><text transform="translate(965.4,2195.3) rotate(-90)" class="e">1,20%</text><text transform="translate(1000.4,2195.3) rotate(-90)" class="e">1,40%</text><text transform="translate(1035.5,2195.3) rotate(-90)" class="e">1,60%</text><text transform="translate(1070.5,2195.3) rotate(-90)" class="e">1,80%</text>
</g>
</svg>
</body></html>
